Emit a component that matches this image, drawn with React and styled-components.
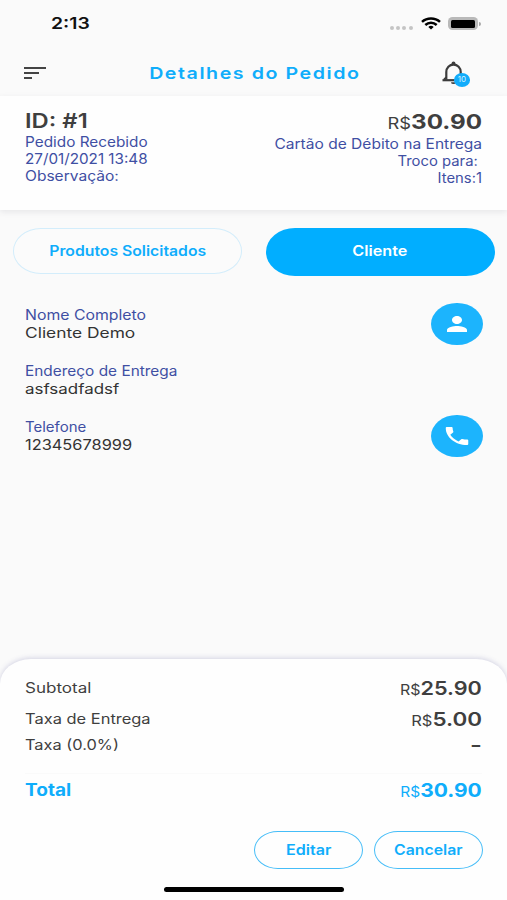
import React from 'react';
import styled, { createGlobalStyle } from 'styled-components';

const App = () => {
  return (
    <Screen>
      <GlobalStyle />
      <StatusBar>
        <Text $size={16} $weight={600} $wide={1.21} $color="#111">2:13</Text>
        <StatusIcons>
          <Dots><i /><i /><i /><i /></Dots>
          <WifiIcon />
          <Battery><Charge /></Battery>
          <BatteryTip />
        </StatusIcons>
      </StatusBar>

      <AppBar>
        <MenuButton><i /><i /><i /></MenuButton>
        <Text $size={16.5} $weight={600} $wide={1.19} $spacing={1.3} $color={blue} $origin="center">Detalhes do Pedido</Text>
        <BellButton>
          <BellIcon />
          <Badge>10</Badge>
        </BellButton>
      </AppBar>

      <OrderHeader>
        <OrderInfo>
          <Text $size={19.5} $weight={600} $wide={1.22} $line={24}>ID: #1</Text>
          <Text $wide={1.095} $color={indigo}>Pedido Recebido</Text>
          <Text $wide={1.088} $color={indigo}>27/01/2021 13:48</Text>
          <Text $wide={1.11} $color={indigo}>Observação:</Text>
        </OrderInfo>
        <OrderPayment>
          <Text $size={20.5} $weight={700} $wide={1.18} $line={23} $origin="right"><Currency $size={15.5}>R$</Currency>30.90</Text>
          <Text $wide={1.11} $color={indigo} $origin="right">Cartão de Débito na Entrega</Text>
          <ChangeLine><Text $wide={1.06} $color={indigo} $origin="right">Troco para:</Text></ChangeLine>
          <Text $wide={1.06} $color={indigo} $origin="right">Itens:1</Text>
        </OrderPayment>
      </OrderHeader>

      <Tabs>
        <Tab>
          <Text $weight={600} $wide={1.125} $color={blue} $origin="center">Produtos Solicitados</Text>
        </Tab>
        <Tab $active>
          <Text $weight={600} $wide={1.155} $color="#fff" $origin="center">Cliente</Text>
        </Tab>
      </Tabs>

      <Client>
        <Field>
          <FieldText>
            <Text $wide={1.13} $line={18} $color={indigo}>Nome Completo</Text>
            <Text $wide={1.24} $line={18} $color="#333">Cliente Demo</Text>
          </FieldText>
          <RoundButton>
            <StretchedIcon viewBox="0 0 24 24" preserveAspectRatio="none">
              <path d="M12 12c2.21 0 4-1.79 4-4s-1.79-4-4-4-4 1.79-4 4 1.79 4 4 4zm0 2c-2.67 0-8 1.34-8 4v2h16v-2c0-2.66-5.33-4-8-4z" />
            </StretchedIcon>
          </RoundButton>
        </Field>
        <Field>
          <FieldText>
            <Text $wide={1.1} $line={18} $color={indigo}>Endereço de Entrega</Text>
            <Text $wide={1.21} $line={18} $color="#333">asfsadfadsf</Text>
          </FieldText>
        </Field>
        <Field>
          <FieldText>
            <Text $wide={1.07} $line={18} $color={indigo}>Telefone</Text>
            <Text $wide={1.17} $line={18} $color="#333">12345678999</Text>
          </FieldText>
          <RoundButton>
            <StretchedIcon viewBox="0 0 24 24" preserveAspectRatio="none">
              <path d="M6.62 10.79c1.44 2.83 3.76 5.14 6.59 6.59l2.2-2.2c.27-.27.67-.36 1.02-.24 1.12.37 2.33.57 3.57.57.55 0 1 .45 1 1V20c0 .55-.45 1-1 1-9.39 0-17-7.61-17-17 0-.55.45-1 1-1h3.5c.55 0 1 .45 1 1 0 1.25.2 2.45.57 3.57.11.35.03.74-.25 1.02l-2.2 2.2z" />
            </StretchedIcon>
          </RoundButton>
        </Field>
      </Client>

      <Summary>
        <SummaryRow $height={31}>
          <Text $wide={1.215}>Subtotal</Text>
          <Text $size={19} $weight={600} $wide={1.14} $origin="right"><Currency $size={14}>R$</Currency>25.90</Text>
        </SummaryRow>
        <SummaryRow $height={26}>
          <Text $wide={1.175}>Taxa de Entrega</Text>
          <Text $size={19} $weight={600} $wide={1.18} $origin="right"><Currency $size={14}>R$</Currency>5.00</Text>
        </SummaryRow>
        <SummaryRow $height={37}>
          <Text $wide={1.17}>Taxa (0.0%)</Text>
          <Text $size={19} $weight={600} $wide={1.35} $origin="right">-</Text>
        </SummaryRow>
        <TotalRow>
          <Text $size={17} $weight={700} $wide={1.12} $color={blue}>Total</Text>
          <Text $size={19} $weight={700} $wide={1.105} $color={blue} $origin="right"><Currency $size={14}>R$</Currency>30.90</Text>
        </TotalRow>
        <Actions>
          <ActionButton>
            <Text $weight={600} $wide={1.15} $color={blue} $origin="center">Editar</Text>
          </ActionButton>
          <ActionButton>
            <Text $weight={600} $wide={1.13} $color={blue} $origin="center">Cancelar</Text>
          </ActionButton>
        </Actions>
        <HomeIndicator />
      </Summary>
    </Screen>
  );
};

const blue = '#0fadfb';
const indigo = '#3f4fa3';

const WifiIcon = () => (
  <svg width="20" height="13" viewBox="0 0 20 13" fill="none" stroke="#000" strokeWidth="2.5">
    <path d="M1 4.9C6 0.3 14 0.3 19 4.9" />
    <path d="M4.3 8C7.6 5 12.4 5 15.7 8" />
    <path d="M7.3 9.9C8.9 8.4 11.1 8.4 12.7 9.9L10 12.6z" fill="#000" stroke="none" />
  </svg>
);

const BellIcon = () => (
  <svg width="24" height="24" viewBox="0 0 24 24" fill="none" stroke="#3c3c3c" strokeWidth="2.2">
    <path d="M4.3 18.5V11C4.3 6.8 7.4 3.6 11.5 3.6S18.7 6.8 18.7 11v7.5" />
    <path d="M0.5 19.2h22" />
    <path d="M2.2 18.6L4.3 16.4M20.8 18.6l-2.1-2.2" />
    <path d="M9 21.2a2.5 1.9 0 0 0 5 0z" fill="#3c3c3c" stroke="none" />
    <ellipse cx="11.5" cy="2.2" rx="1.9" ry="1.7" fill="#3c3c3c" stroke="none" />
  </svg>
);

const GlobalStyle = createGlobalStyle`
  * {
    box-sizing: border-box;
  }
  body {
    margin: 0;
    background: #fafafa;
    font-family: Inter, "Open Sans", sans-serif;
  }
  button {
    font: inherit;
    padding: 0;
    margin: 0;
    border: none;
    background: none;
  }
`;
const Screen = styled.div`
  width: 507px;
  height: 900px;
  display: flex;
  flex-direction: column;
  overflow: hidden;
  background: #fafafa;
`;
const Text = styled.span`
  display: block;
  white-space: nowrap;
  font-size: ${(p) => p.$size || 14}px;
  font-weight: ${(p) => p.$weight || 400};
  line-height: ${(p) => p.$line || 17}px;
  letter-spacing: ${(p) => p.$spacing || 0}px;
  color: ${(p) => p.$color || '#3f3f3f'};
  transform: scaleX(${(p) => p.$wide || 1});
  transform-origin: ${(p) => p.$origin || 'left'};
`;
const Currency = styled.span`
  font-size: ${(p) => p.$size}px;
  font-weight: 400;
`;
const StatusBar = styled.div`
  height: 47px;
  flex: none;
  display: flex;
  align-items: center;
  justify-content: space-between;
  padding: 0 26px 0 51px;
`;
const StatusIcons = styled.div`
  display: flex;
  align-items: center;
`;
const Dots = styled.div`
  display: flex;
  gap: 2.2px;
  margin: 8px 8px 0 0;
  i {
    width: 4px;
    height: 4px;
    border-radius: 50%;
    background: #c4c4c4;
  }
`;
const Battery = styled.div`
  width: 30.5px;
  height: 13px;
  margin-left: 7px;
  padding: 2.5px 3px;
  border-radius: 4.5px;
  background: #b9b9b9;
`;
const Charge = styled.div`
  height: 8px;
  border-radius: 1.5px;
  background: #000;
`;
const BatteryTip = styled.div`
  width: 2px;
  height: 4px;
  margin-left: 1px;
  border-radius: 0 2px 2px 0;
  background: #a8a8a8;
`;
const AppBar = styled.div`
  height: 49px;
  flex: none;
  display: grid;
  grid-template-columns: 28px 1fr 28px;
  align-items: center;
  justify-items: center;
  padding: 3px 37px 0 24px;
  > span {
    margin-left: 16px;
  }
`;
const MenuButton = styled.button`
  width: 28px;
  display: flex;
  flex-direction: column;
  gap: 3px;
  i {
    height: 2px;
    width: 22px;
    background: #444;
  }
  i:nth-child(2) {
    width: 15px;
  }
  i:nth-child(3) {
    width: 8px;
  }
`;
const BellButton = styled.button`
  position: relative;
  width: 28px;
  height: 24px;
  display: flex;
`;
const Badge = styled.span`
  position: absolute;
  left: 12px;
  top: 12px;
  width: 16px;
  height: 13.5px;
  border-radius: 50%;
  background: #12acfb;
  color: #d5f1ff;
  font-size: 8px;
  line-height: 12.5px;
  text-align: center;
`;
const OrderHeader = styled.div`
  height: 114px;
  flex: none;
  display: flex;
  justify-content: space-between;
  padding: 13px 25px 0 25px;
  background: #fefefe;
  box-shadow: 0 2px 6px rgba(60, 60, 80, 0.1);
`;
const OrderInfo = styled.div`
  display: flex;
  flex-direction: column;
`;
const OrderPayment = styled.div`
  display: flex;
  flex-direction: column;
  align-items: flex-end;
  padding-top: 1px;
`;
const ChangeLine = styled.div`
  padding-right: 4px;
`;
const Tabs = styled.div`
  flex: none;
  display: grid;
  grid-template-columns: 1fr 1fr;
  align-items: start;
  gap: 24.5px;
  padding: 18px 12.5px 0 13px;
`;
const Tab = styled.button`
  height: ${(p) => (p.$active ? '48px' : '46px')};
  display: flex;
  align-items: center;
  justify-content: center;
  padding-bottom: ${(p) => (p.$active ? '4px' : '2px')};
  border: ${(p) => (p.$active ? 'none' : '1.5px solid #d3edfb')};
  border-radius: 29px / 24px;
  background: ${(p) => (p.$active ? '#01aeff' : '#fbfbfb')};
`;
const Client = styled.div`
  flex: 1;
  display: flex;
  flex-direction: column;
  padding: 27px 24.5px 0 25px;
`;
const Field = styled.div`
  height: 56.2px;
  display: flex;
  justify-content: space-between;
  align-items: flex-start;
`;
const FieldText = styled.div`
  padding-top: 3px;
`;
const RoundButton = styled.button`
  width: 51.5px;
  height: 42px;
  display: flex;
  align-items: center;
  justify-content: center;
  border-radius: 50%;
  background: #1cb4fd;
`;
const StretchedIcon = styled.svg`
  width: 30px;
  height: 24px;
  fill: #fff;
`;
const Summary = styled.div`
  height: 241px;
  flex: none;
  display: flex;
  flex-direction: column;
  padding: 20px 25px 0 25px;
  border-radius: 31px 31px 0 0 / 25px 25px 0 0;
  background: #fefefe;
  box-shadow: 0 -1px 5px rgba(90, 90, 160, 0.24);
`;
const SummaryRow = styled.div`
  height: ${(p) => p.$height}px;
  display: flex;
  align-items: flex-start;
  justify-content: space-between;
  span + span {
    margin-top: 1px;
  }
`;
const TotalRow = styled.div`
  display: flex;
  height: 58px;
  padding-top: 8px;
  border-top: 1px solid #fafafa;
  align-items: flex-start;
  justify-content: space-between;
`;
const Actions = styled.div`
  display: flex;
  justify-content: flex-end;
  gap: 10.5px;
  margin-right: -1px;
`;
const ActionButton = styled.button`
  width: 109.3px;
  height: 38px;
  display: flex;
  align-items: center;
  justify-content: center;
  padding-bottom: 2px;
  border: 1.4px solid #45bdf8;
  border-radius: 24px / 19px;
`;
const HomeIndicator = styled.div`
  width: 180px;
  height: 5px;
  margin: 18px 0 0 139px;
  border-radius: 3px;
  background: #000;
`;

export default App;
